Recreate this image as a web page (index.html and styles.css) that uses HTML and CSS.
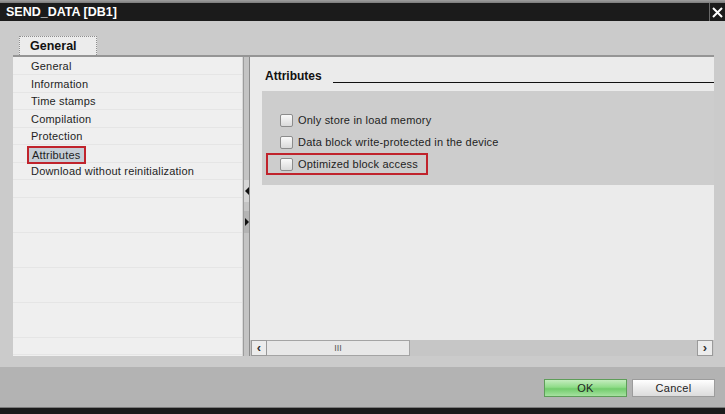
FILE: index.html
```html
<!DOCTYPE html>
<html lang="en">
<head>
    <meta charset="UTF-8">
    <meta name="viewport" content="width=device-width, initial-scale=1.0">
    <title>SEND_DATA [DB1]</title>
    <link rel="stylesheet" href="styles.css">
</head>
<body>
    <div class="titlebar">
        <span class="title">SEND_DATA [DB1]</span>
        <span class="close">
            <svg width="11" height="11" viewBox="0 0 11 11">
                <path d="M1 1 L10 10 M10 1 L1 10" stroke="#fff" stroke-width="2" fill="none"/>
            </svg>
        </span>
    </div>

    <div class="dialog">
        <div class="tabs">
            <div class="tab">General</div>
        </div>

        <div class="panel">
            <!-- Left navigation list -->
            <div class="nav">
                <div class="nav-item">General</div>
                <div class="nav-item">Information</div>
                <div class="nav-item">Time stamps</div>
                <div class="nav-item">Compilation</div>
                <div class="nav-item">Protection</div>
                <div class="nav-item"><span class="selected">Attributes</span></div>
                <div class="nav-item">Download without reinitialization</div>
            </div>

            <div class="splitter">
                <div class="split-btn split-left"><span class="arrow-left"></span></div>
                <div class="split-btn split-right"><span class="arrow-right"></span></div>
            </div>

            <!-- Properties area -->
            <div class="content">
                <div class="section-head">
                    <span class="section-title">Attributes</span>
                    <span class="section-rule"></span>
                </div>
                <div class="section-body">
                    <label class="option"><span class="checkbox"></span>Only store in load memory</label>
                    <label class="option"><span class="checkbox"></span>Data block write-protected in the device</label>
                    <label class="option highlight"><span class="checkbox"></span>Optimized block access</label>
                </div>
                <div class="filler"></div>
                <div class="hscroll">
                    <div class="scroll-btn">&#8249;</div>
                    <div class="scroll-thumb">III</div>
                    <div class="scroll-track"></div>
                    <div class="scroll-btn">&#8250;</div>
                </div>
            </div>
        </div>
    </div>

    <div class="footer">
        <button class="btn btn-ok">OK</button>
        <button class="btn btn-cancel">Cancel</button>
    </div>
    <div class="bottombar"></div>
</body>
</html>
```

FILE: styles.css
```css
body {
    margin: 0;
    width: 725px;
    height: 414px;
    overflow: hidden;
    background: #cbcbcb;
    font-family: 'Liberation Sans', Arial, sans-serif;
    font-size: 11px;
    color: #1e1e1e;
    display: flex;
    flex-direction: column;
}

.titlebar {
    height: 21px;
    flex: none;
    background: linear-gradient(to bottom, #a0a0a0 0, #7c7c7c 3px, #1b1b1b 3px, #1b1b1b 100%);
    display: flex;
    align-items: center;
    padding-top: 3px;
    box-sizing: border-box;
}

.title {
    color: #fff;
    font-weight: bold;
    font-size: 12.5px;
    margin-left: 6px;
    flex: 1;
}

.close {
    width: 15px;
    height: 18px;
    border-left: 1px solid #6a6a6a;
    display: flex;
    align-items: center;
    justify-content: center;
}

.dialog {
    height: 346px;
    flex: none;
    padding: 15px 11px 0 13px;
    box-sizing: border-box;
}

.tabs {
    height: 19px;
    display: flex;
    padding-left: 6px;
}

.tab {
    width: 78px;
    box-sizing: border-box;
    background: #ececec;
    border: 1px dotted #8e8e8e;
    border-bottom: none;
    font-size: 12.5px;
    font-weight: bold;
    color: #111;
    padding: 2px 0 0 10px;
}

.panel {
    height: 301px;
    border-top: 2px solid #959595;
    box-sizing: border-box;
    display: flex;
}

.nav {
    width: 230px;
    flex: none;
    padding-top: 1px;
    box-sizing: border-box;
    background-color: #efefef;
    background-image: repeating-linear-gradient(to bottom, transparent 0, transparent 16.5px, #e5e5e5 16.5px, #e5e5e5 17.5px);
    background-position: 0 1px;
    border-right: 1px solid #d8d8d8;
}

.nav-item {
    height: 17.5px;
    line-height: 17.5px;
    padding-left: 18px;
    letter-spacing: 0.2px;
}

.nav-item .selected {
    display: inline-block;
    margin-left: -4px;
    padding: 0 4px 0 3px;
    line-height: 14px;
    background: #c6ced6;
    border: 2px solid #c0232c;
}

.splitter {
    width: 7px;
    flex: none;
    box-sizing: border-box;
    background: #c4c4c4;
    border-left: 1px solid #9c9c9c;
    border-right: 1px solid #8c8c8c;
    padding-top: 123px;
}

.split-btn {
    height: 22px;
    display: flex;
    align-items: center;
    justify-content: center;
}

.split-left {
    background: #d6d6d6;
    margin-bottom: 9px;
}

.split-right {
    background: #b4b4b4;
}

.arrow-left {
    border-top: 4px solid transparent;
    border-bottom: 4px solid transparent;
    border-right: 4px solid #111;
}

.arrow-right {
    border-top: 4px solid transparent;
    border-bottom: 4px solid transparent;
    border-left: 4px solid #111;
}

.content {
    flex: 1;
    background: #ebebeb;
    display: flex;
    flex-direction: column;
}

.section-head {
    height: 34px;
    flex: none;
    display: flex;
    align-items: flex-end;
    padding: 0 0 8px 15px;
    box-sizing: border-box;
}

.section-title {
    font-size: 12px;
    font-weight: bold;
    line-height: 14px;
    color: #111;
}

.section-rule {
    flex: 1;
    height: 0;
    margin-left: 11px;
    border-bottom: 1px solid #111;
}

.section-body {
    background: #cdcdcd;
    margin-left: 12px;
    padding: 18px 0 10px 4px;
    display: flex;
    flex-direction: column;
    align-items: flex-start;
}

.option {
    height: 22px;
    box-sizing: border-box;
    border: 2px solid transparent;
    padding-left: 12px;
    display: flex;
    align-items: center;
    letter-spacing: 0.2px;
}

.option.highlight {
    width: 162px;
    border-color: #c0232c;
}

.checkbox {
    width: 11px;
    height: 11px;
    border: 1px solid #8c8c8c;
    border-radius: 2px;
    background: linear-gradient(to bottom, #fafafa, #dadada);
    margin-right: 5px;
}

.filler {
    flex: 1;
}

.hscroll {
    height: 16px;
    flex: none;
    background: #c6c6c6;
    display: flex;
    padding: 0 1px;
}

.scroll-btn {
    width: 16px;
    box-sizing: border-box;
    background: #ececec;
    border: 1px solid #9a9a9a;
    font-size: 13px;
    line-height: 13px;
    text-align: center;
    font-weight: bold;
    color: #333;
}

.scroll-thumb {
    width: 143px;
    box-sizing: border-box;
    background: #e8e8e8;
    border: 1px solid #a4a4a4;
    border-left: none;
    text-align: center;
    font-size: 9px;
    line-height: 14px;
    color: #555;
}

.scroll-track {
    flex: 1;
}

.footer {
    height: 40px;
    flex: none;
    background: #b3b3b3;
    display: flex;
    justify-content: flex-end;
    align-items: flex-start;
    gap: 5px;
    padding: 12px 10px 0 0;
    box-sizing: border-box;
}

.btn {
    width: 83px;
    height: 18px;
    font-family: 'Liberation Sans', Arial, sans-serif;
    font-size: 11px;
    letter-spacing: 0.3px;
    color: #1e1e1e;
    padding: 0;
    cursor: pointer;
}

.btn-ok {
    background: linear-gradient(to bottom, #c4ecbe 0%, #8fdc88 45%, #72cc6c 55%, #a6e2a0 100%);
    border: 1px solid #5e9d59;
}

.btn-cancel {
    background: linear-gradient(to bottom, #ffffff 0%, #ececec 50%, #dcdcdc 100%);
    border: 1px solid #9c9c9c;
}

.bottombar {
    flex: 1;
    background: #1b1b1b;
    border-top: 1px solid #7a7a7a;
}
```
